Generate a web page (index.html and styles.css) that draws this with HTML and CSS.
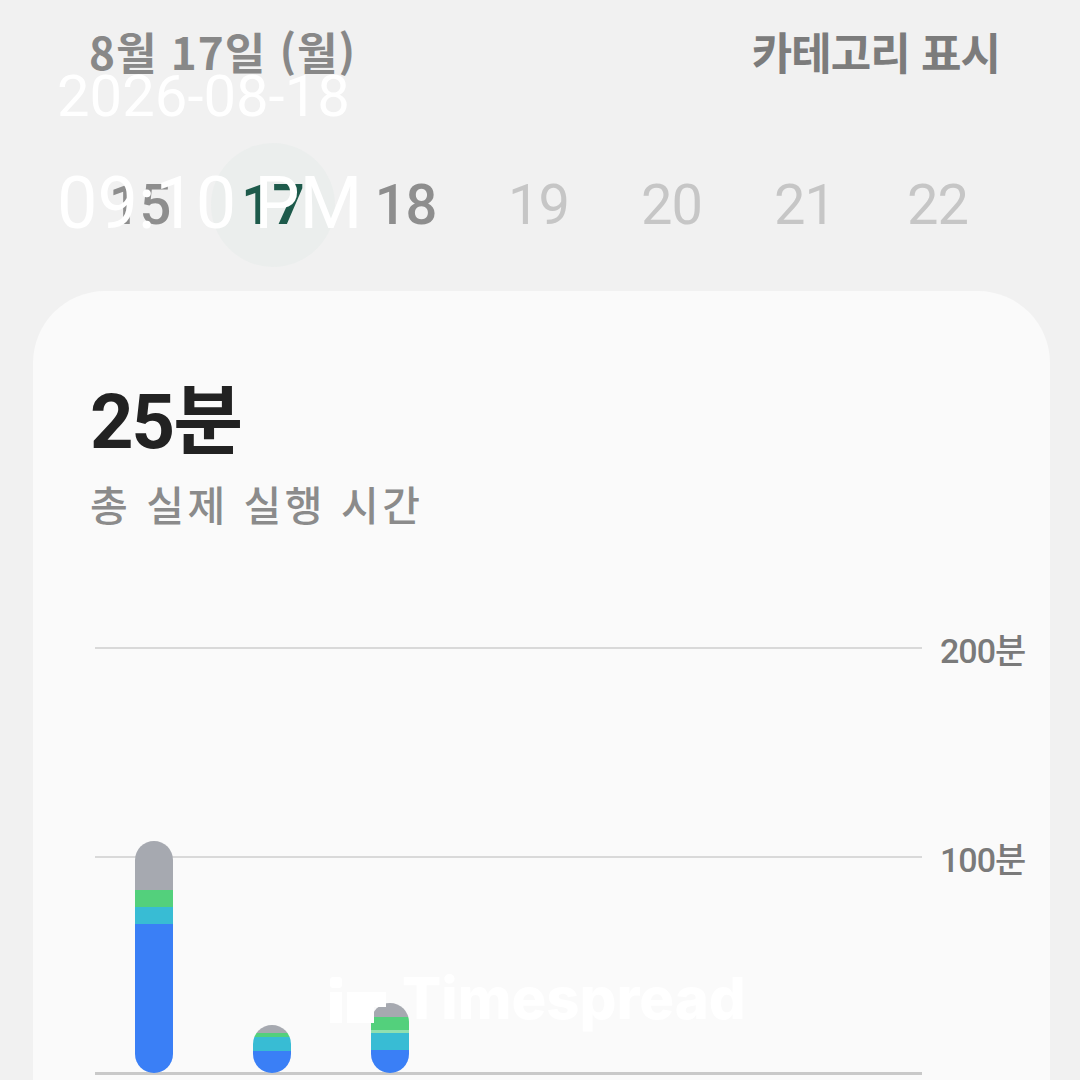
FILE: index.html
```html
<!DOCTYPE html>
<html lang="ko">
<head>
    <meta charset="UTF-8">
    <meta name="viewport" content="width=device-width, initial-scale=1.0">
    <title>실행 시간</title>
    <link rel="stylesheet" href="styles.css">
</head>
<body>
    <div class="screen">
        <header class="top-bar">
            <span class="date-title">8월 17일 (월)</span>
            <span class="category-toggle">카테고리 표시</span>
        </header>

        <div class="week-strip">
            <div class="day day-past">15</div>
            <div class="day day-selected">17</div>
            <div class="day day-past">18</div>
            <div class="day day-future">19</div>
            <div class="day day-future">20</div>
            <div class="day day-future">21</div>
            <div class="day day-future">22</div>
        </div>

        <section class="card">
            <div class="total">25분</div>
            <div class="total-label">총 실제 실행 시간</div>

            <div class="chart">
                <div class="grid-lines">
                    <div class="grid-row">
                        <span class="grid-line"></span>
                        <span class="grid-label">200분</span>
                    </div>
                    <div class="grid-row row-mid">
                        <span class="grid-line"></span>
                        <span class="grid-label">100분</span>
                    </div>
                    <div class="base-line"></div>
                </div>

                <div class="bars">
                    <div class="bar">
                        <span class="seg seg-gray" style="height: 49px"></span>
                        <span class="seg seg-green" style="height: 17px"></span>
                        <span class="seg seg-teal" style="height: 17px"></span>
                        <span class="seg seg-blue" style="height: 149px"></span>
                    </div>
                    <div class="bar">
                        <span class="seg seg-gray" style="height: 8px"></span>
                        <span class="seg seg-green" style="height: 4px"></span>
                        <span class="seg seg-teal" style="height: 14px"></span>
                        <span class="seg seg-blue" style="height: 22px"></span>
                    </div>
                    <div class="bar">
                        <span class="seg seg-gray" style="height: 14px"></span>
                        <span class="seg seg-green" style="height: 13px"></span>
                        <span class="seg seg-light" style="height: 3px"></span>
                        <span class="seg seg-teal" style="height: 17px"></span>
                        <span class="seg seg-blue" style="height: 23px"></span>
                    </div>
                </div>
            </div>
        </section>
    </div>

    <!-- camera timestamp -->
    <div class="stamp">
        <div class="stamp-date">2026-08-18</div>
        <div class="stamp-time">09:10 PM</div>
    </div>

    <!-- app watermark -->
    <div class="watermark">
        <svg class="watermark-icon" width="58" height="46" viewBox="0 0 58 46">
            <rect x="0" y="0" width="12" height="11" rx="3" fill="#fff"/>
            <rect x="0" y="15" width="12" height="31" fill="#fff"/>
            <path d="M17 15 H56 V30 H44 V46 H17 Z" fill="#fff"/>
        </svg>
        <span>Timespread</span>
    </div>
</body>
</html>
```

FILE: styles.css
```css
body {
    margin: 0;
    background-color: #f1f1f1;
    font-family: Roboto, "Noto Sans CJK KR", sans-serif;
    overflow: hidden;
}

.screen {
    width: 1080px;
    height: 1080px;
    overflow: hidden;
}

.top-bar {
    display: flex;
    justify-content: space-between;
    align-items: center;
    height: 60px;
    padding: 21px 80px 0 89px;
    font-family: "Noto Sans CJK KR", sans-serif;
    font-size: 44px;
    font-weight: 700;
}

.date-title {
    color: #888;
    letter-spacing: 1px;
}

.category-toggle {
    color: #7c7c7c;
    letter-spacing: -1px;
}

/* week strip */
.week-strip {
    display: grid;
    grid-template-columns: repeat(7, 133px);
    padding-left: 73px;
    margin-top: 62px;
}

.day {
    width: 124px;
    height: 124px;
    margin: 0 auto;
    border-radius: 50%;
    display: flex;
    align-items: center;
    justify-content: center;
    font-size: 56px;
    letter-spacing: -1px;
}

.day-past {
    color: #8e8e8e;
    font-weight: 500;
}

.day-selected {
    background: #ebeeed;
    color: #1d5a4b;
    font-weight: 700;
}

.day-future {
    color: #c6c6c6;
    font-weight: 400;
}

/* card */
.card {
    margin: 24px 30px 0 33px;
    height: 820px;
    background: #fafafa;
    border-radius: 72px 72px 0 0;
    padding: 85px 22px 0 57px;
}

.total {
    font-size: 76px;
    font-weight: 700;
    color: #222;
    letter-spacing: -2px;
    line-height: 92px;
}

.total-label {
    font-family: "Noto Sans CJK KR", sans-serif;
    font-size: 41px;
    font-weight: 500;
    color: #8b8b8b;
    letter-spacing: 3.5px;
    margin-top: 5px;
}

/* chart */
.chart {
    display: grid;
    margin-top: 97px;
    margin-left: 5px;
}

.grid-lines,
.bars {
    grid-area: 1 / 1;
}

.grid-row {
    display: flex;
    align-items: center;
    gap: 18px;
    height: 36px;
}

.row-mid {
    margin-top: 173px;
}

.grid-line {
    flex: 1;
    height: 2px;
    background: #d9d9d9;
}

.grid-label {
    width: 88px;
    font-size: 34px;
    font-weight: 500;
    color: #7a7a7a;
    letter-spacing: -1px;
    white-space: nowrap;
}

.base-line {
    margin-top: 197px;
    margin-right: 106px;
    height: 3px;
    background: #c9c9c9;
}

.bars {
    display: flex;
    align-items: flex-end;
    gap: 80px;
    padding-left: 40px;
    padding-bottom: 2px;
}

.bar {
    width: 38px;
    border-radius: 19px;
    overflow: hidden;
    display: flex;
    flex-direction: column;
}

.seg {
    display: block;
}

.seg-gray { background: #a6a9b0; }
.seg-green { background: #53d07c; }
.seg-light { background: #8fe0b0; }
.seg-teal { background: #38bcd4; }
.seg-blue { background: #3a7ff6; }

/* overlays */
.stamp {
    position: absolute;
    top: 67px;
    left: 57px;
    color: #fff;
    font-family: Roboto, sans-serif;
    font-weight: 400;
}

.stamp-date {
    font-size: 58px;
    line-height: 58px;
}

.stamp-time {
    font-size: 72px;
    line-height: 72px;
    margin-top: 43px;
}

.watermark {
    position: absolute;
    top: 973px;
    left: 330px;
    display: flex;
    align-items: flex-end;
    gap: 14px;
    color: rgba(255, 255, 255, 0.95);
    font-family: Inter, sans-serif;
    font-size: 58px;
    font-weight: 800;
    line-height: 50px;
}
```
